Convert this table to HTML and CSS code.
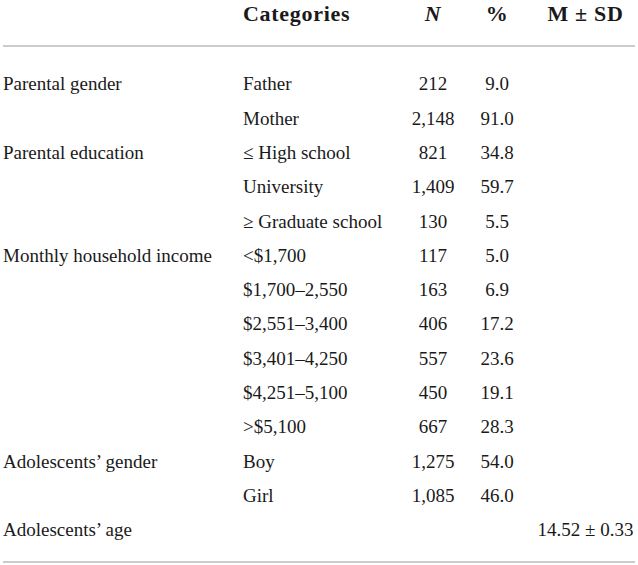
FILE: index.html
```html
<!DOCTYPE html>
<html lang="en">
<head>
<meta charset="utf-8">
<title>Table</title>
<link rel="stylesheet" href="styles.css">
</head>
<body>
<div class="wrap">
<table class="data">
  <colgroup>
    <col class="c1"><col class="c2"><col class="c3"><col class="c4"><col class="c5">
  </colgroup>
  <thead>
    <tr>
      <th class="lab"></th>
      <th class="lab">Categories</th>
      <th class="num"><i>N</i></th>
      <th class="num">%</th>
      <th class="num">M ± SD</th>
    </tr>
  </thead>
  <tbody>
    <tr class="first"><td>Parental gender</td><td>Father</td><td class="num">212</td><td class="num">9.0</td><td class="num"></td></tr>
    <tr><td></td><td>Mother</td><td class="num">2,148</td><td class="num">91.0</td><td class="num"></td></tr>
    <tr><td>Parental education</td><td>≤ High school</td><td class="num">821</td><td class="num">34.8</td><td class="num"></td></tr>
    <tr><td></td><td>University</td><td class="num">1,409</td><td class="num">59.7</td><td class="num"></td></tr>
    <tr><td></td><td>≥ Graduate school</td><td class="num">130</td><td class="num">5.5</td><td class="num"></td></tr>
    <tr><td>Monthly household income</td><td>&lt;$1,700</td><td class="num">117</td><td class="num">5.0</td><td class="num"></td></tr>
    <tr><td></td><td>$1,700–2,550</td><td class="num">163</td><td class="num">6.9</td><td class="num"></td></tr>
    <tr><td></td><td>$2,551–3,400</td><td class="num">406</td><td class="num">17.2</td><td class="num"></td></tr>
    <tr><td></td><td>$3,401–4,250</td><td class="num">557</td><td class="num">23.6</td><td class="num"></td></tr>
    <tr><td></td><td>$4,251–5,100</td><td class="num">450</td><td class="num">19.1</td><td class="num"></td></tr>
    <tr><td></td><td>&gt;$5,100</td><td class="num">667</td><td class="num">28.3</td><td class="num"></td></tr>
    <tr><td>Adolescents’ gender</td><td>Boy</td><td class="num">1,275</td><td class="num">54.0</td><td class="num"></td></tr>
    <tr><td></td><td>Girl</td><td class="num">1,085</td><td class="num">46.0</td><td class="num"></td></tr>
    <tr class="last"><td>Adolescents’ age</td><td></td><td class="num"></td><td class="num"></td><td class="num">14.52 ± 0.33</td></tr>
  </tbody>
</table>
</div>
</body>
</html>
```
FILE: styles.css
```css
html, body {
  margin: 0;
  padding: 0;
  background: #ffffff;
}
.wrap {
  padding: 0 3px;
  font-family: "Liberation Serif", "Tinos", "Times New Roman", "DejaVu Serif", serif;
}
.data {
  width: 632px;
  table-layout: fixed;
  border-collapse: collapse;
  font-family: inherit;
  color: #1a1a1a;
}
.c1 { width: 240px; }
.c2 { width: 165px; }
.c3 { width: 50px; }
.c4 { width: 78px; }
.c5 { width: 99px; }

.data th {
  font-family: "Liberation Serif", "Tinos", "DejaVu Serif", serif;
  font-size: 22px;
  font-weight: bold;
  letter-spacing: 0.7px;
  line-height: 27px;
  padding: 0 0 18px 0;
  border-bottom: 2px solid #cccccc;
  white-space: nowrap;
}
.data th.lab { text-align: left; }
.data td {
  font-family: "Liberation Serif", "Tinos", "DejaVu Serif", serif;
  font-size: 19px;
  line-height: 34.3px;
  padding: 0;
  text-align: left;
  white-space: nowrap;
}
.data .num { text-align: center; }
.data tr.first td { padding-top: 20.4px; }
.data tr.last td {
  padding-bottom: 13px;
  border-bottom: 2px solid #cccccc;
}
```
